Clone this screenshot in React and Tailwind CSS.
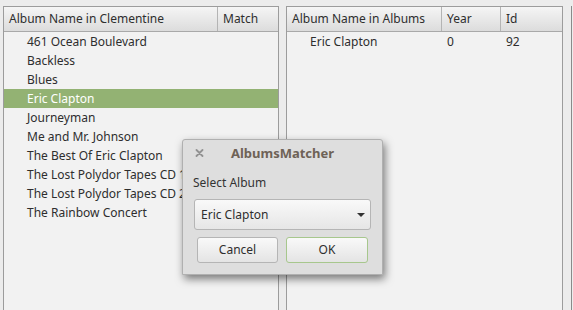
import React from 'react';

const clementine = [
  '461 Ocean Boulevard',
  'Backless',
  'Blues',
  'Eric Clapton',
  'Journeyman',
  'Me and Mr. Johnson',
  'The Best Of Eric Clapton',
  'The Lost Polydor Tapes CD 1',
  'The Lost Polydor Tapes CD 2',
  'The Rainbow Concert',
];

const font = { fontFamily: '"Noto Sans", sans-serif' };

function HeaderCell({ children, className = '' }) {
  return (
    <div className={`h-full flex items-center pl-[5px] border-r border-[#b4b4b4] bg-gradient-to-b from-[#f5f5f5] to-[#dcdcdc] ${className}`}>
      {children}
    </div>
  );
}

export default function App() {
  return (
    <div style={font} className="relative w-[573px] h-[310px] bg-[#ececec] overflow-hidden text-[12px] text-[#2e2e2e]">
      <div className="flex pt-[6px] pl-[3px] h-full">
        {/* Clementine albums */}
        <div className="w-[276px] h-full border border-b-0 border-[#9c9c9c] bg-[#f2f2f2] flex flex-col">
          <div className="flex h-[25px] border-b border-[#a9a9a9]">
            <HeaderCell className="w-[214px]">Album Name in Clementine</HeaderCell>
            <HeaderCell className="flex-1 border-r-0">Match</HeaderCell>
          </div>
          <div className="flex flex-col">
            {clementine.map((name) => (
              <div
                key={name}
                className={`h-[19px] flex items-center pl-[23px] whitespace-nowrap overflow-hidden ${name === 'Eric Clapton' ? 'bg-[#93b273] text-white' : ''}`}
              >
                {name}
              </div>
            ))}
          </div>
        </div>

        {/* Albums */}
        <div className="ml-[7px] w-[277px] h-full border border-b-0 border-[#9c9c9c] bg-[#f2f2f2] flex flex-col">
          <div className="flex h-[25px] border-b border-[#a9a9a9]">
            <HeaderCell className="w-[155px]">Album Name in Albums</HeaderCell>
            <HeaderCell className="w-[59px]">Year</HeaderCell>
            <HeaderCell className="flex-1 border-r-0">Id</HeaderCell>
          </div>
          <div className="flex h-[19px] items-center">
            <div className="w-[155px] pl-[23px]">Eric Clapton</div>
            <div className="w-[59px] pl-[5px]">0</div>
            <div className="pl-[5px]">92</div>
          </div>
        </div>

        <div className="ml-[8px] w-px h-full bg-[#8a8a8a]" />
      </div>

      {/* Dialog */}
      <div className="absolute left-[182px] top-[139px] w-[201px] h-[136px] bg-[#dedede] border border-[#b0b0b0] rounded-t-[3px] shadow-[2px_4px_9px_rgba(0,0,0,0.5)] flex flex-col">
        <div className="relative h-[27px] flex items-center justify-center">
          <svg className="absolute left-[12px] top-[9px]" width="9" height="8" viewBox="0 0 9 8">
            <path d="M1.5 1l6 6M7.5 1l-6 6" stroke="#929292" strokeWidth="1.8" strokeLinecap="round" />
          </svg>
          <span className="font-bold text-[13px] text-[#6e6256]">AlbumsMatcher</span>
        </div>
        <div className="px-[10px] pt-[8px] leading-[16px] text-[#333]">Select Album</div>
        <div className="mx-[11px] mt-[8px] h-[31px] rounded-[3px] border border-[#b5b5b5] bg-gradient-to-b from-[#f9f9f9] to-[#e6e6e6] flex items-center justify-between pl-[6px] pr-[4px]">
          <span>Eric Clapton</span>
          <svg width="10" height="6" viewBox="0 0 10 6"><path d="M1 1h8L5 5z" fill="#333" /></svg>
        </div>
        <div className="flex gap-[8px] px-[14px] mt-[7px]">
          <button className="w-[82px] h-[26px] rounded-[3px] border border-[#b5b5b5] bg-gradient-to-b from-[#f9f9f9] to-[#e4e4e4]">Cancel</button>
          <button className="w-[83px] h-[26px] rounded-[3px] border border-[#a7c78d] bg-gradient-to-b from-[#f9f9f9] to-[#e4e4e4]">OK</button>
        </div>
      </div>
    </div>
  );
}
